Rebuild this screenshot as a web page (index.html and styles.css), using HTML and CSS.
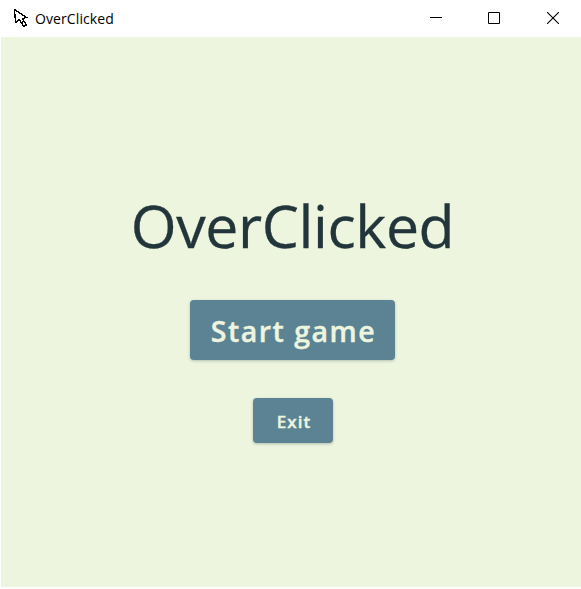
FILE: index.html
```html
<!DOCTYPE html>
<html lang="en">
<head>
<meta charset="utf-8">
<title>OverClicked</title>
<link rel="stylesheet" href="styles.css">
</head>
<body>
<div class="window">
  <header class="titlebar">
    <svg class="app-icon" width="18" height="22" viewBox="0 0 18 22" fill="none" stroke="#000" stroke-width="1.3" shape-rendering="crispEdges"><path d="M1.500 1.500 2.500 14.500 6.500 11.500 10.500 18.500 13.500 17 9.500 10.500 13.500 9.500Z"/><path d="M8.500 14.500 11.500 13"/></svg>
    <span class="caption">OverClicked</span>
    <div class="controls">
      <svg width="12" height="12" viewBox="0 0 12 12"><path d="M0 5.5H12" stroke="#000"/></svg>
      <svg width="12" height="12" viewBox="0 0 12 12"><path d="M.5.5H11.500V11.500H.5Z" fill="none" stroke="#000"/></svg>
      <svg class="close" width="12" height="12" viewBox="0 0 12 12"><path d="M0 0 12 12M12 0 0 12" stroke="#000" stroke-width="1.1"/></svg>
    </div>
  </header>
  <main class="menu">
    <h1 class="title">OverClicked</h1>
    <button class="btn start">Start game</button>
    <button class="btn exit">Exit</button>
  </main>
</div>
</body>
</html>
```
FILE: styles.css
```css
* { box-sizing: border-box; }
body { margin: 0; background: #fff; font-family: "Open Sans", "Noto Sans", sans-serif; }
.window { height: 587px; display: flex; flex-direction: column; }
.titlebar { height: 37px; display: flex; align-items: center; padding: 0 22px 0 13px; }
.app-icon { flex: none; }
.caption { margin-left: 4px; font-size: 14px; letter-spacing: 0.100px; color: #000; }
.controls { margin: 0 0 1px auto; display: flex; gap: 46px; }
.close { margin-left: 1px; }
.menu { flex: 1; margin-left: 1px; background: #edf5df; display: flex; flex-direction: column; align-items: center; padding-left: 3px; }
.title { margin: 147px 0 0; height: 82px; line-height: 82px; font-size: 59px; font-weight: 400; letter-spacing: -0.4px; color: #22353a; -webkit-text-stroke: 0.300px #22353a; white-space: nowrap; }
.btn { border: 0; border-radius: 4px; padding: 0; background: #5b8393; color: #edf5df; font-family: inherit; font-weight: 600; -webkit-text-stroke: 0.400px #edf5df; box-shadow: 0 1px 3px rgba(40, 60, 60, .3); white-space: nowrap; }
.start { width: 205px; height: 60px; margin-top: 34px; padding: 1px 0 0 2px; font-size: 28.500px; letter-spacing: 1.500px; }
.exit { width: 80px; height: 45px; margin-top: 38px; padding: 1px 0 0 3px; font-size: 17px; letter-spacing: 1px; }
```
